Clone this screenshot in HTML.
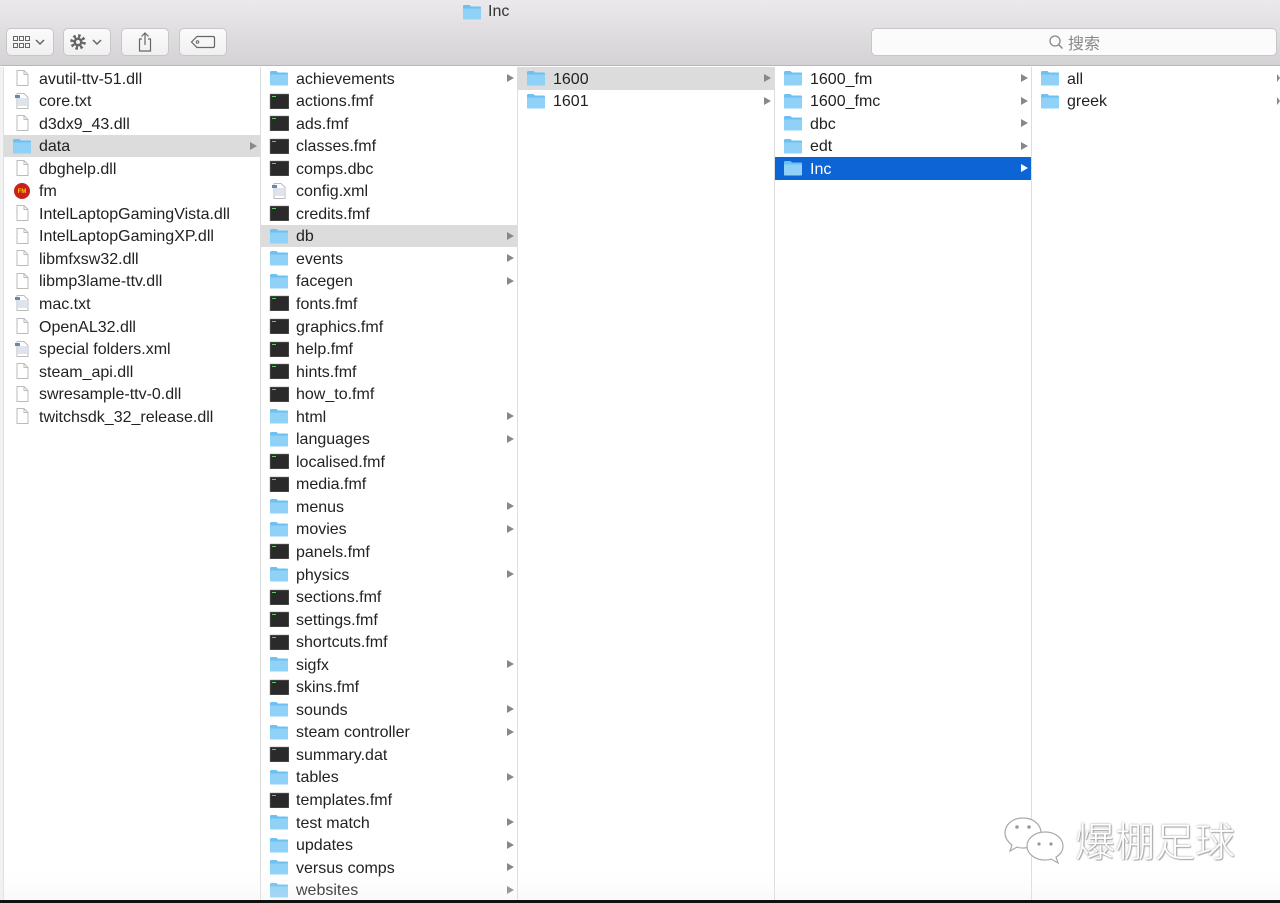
<!DOCTYPE html>
<html><head><meta charset="utf-8"><style>
*{margin:0;padding:0;box-sizing:border-box}
body{width:1280px;height:903px;overflow:hidden;background:#fff;font-family:"Liberation Sans","Noto Sans CJK SC",sans-serif;position:relative}
.tb{position:absolute;left:0;top:0;width:1280px;height:66px;background:linear-gradient(#ebe9eb,#d4d2d4);border-bottom:1px solid #b8b6b8}
.title{position:absolute;left:462px;top:3px;font-size:16px;color:#333;display:flex;align-items:center;gap:6px}
.btn{position:absolute;top:28px;height:28px;background:linear-gradient(#fbfbfb,#f0f0f0);border:1px solid #c8c6c8;border-radius:5px;display:flex;align-items:center;justify-content:center}
.search{position:absolute;left:871px;top:28px;width:406px;height:28px;background:#fbfbfb;border:1px solid #c8c6c8;border-radius:5px;font-size:16px;color:#888;display:flex;align-items:center;justify-content:center;gap:4px}
.col{position:absolute;top:67px;bottom:0;border-right:1px solid #ddd}
.row{height:22.55px;position:relative;font-size:16px;color:#222;line-height:23px}
.row span{position:absolute;left:35px;top:0.5px}
.row svg.i{position:absolute;left:8px;top:3px}
.row .ar{position:absolute;right:3px;top:7px;width:0;height:0;border-left:7px solid #888;border-top:4.5px solid transparent;border-bottom:4.5px solid transparent}
.sel{background:#dcdcdc}
.bsel{background:#0d64d5;color:#fff}
.bsel .ar{border-left-color:#fff}
.wm{position:absolute;left:1002px;top:810px;font-size:40px;color:#fff;text-shadow:0 0 2px #999,1px 1px 1px #aaa;font-family:"Noto Sans CJK SC",sans-serif;font-weight:300}
</style></head><body>
<svg width="0" height="0" style="position:absolute"><defs>
<symbol id="f" viewBox="0 0 20 16"><path d="M1 2.5Q1 1 2.5 1H7.5L9 2.5H18Q19 2.5 19 3.5V14.5Q19 15.5 18 15.5H2Q1 15.5 1 14.5Z" fill="#6cc1f2"/><path d="M1 4.5H19V14.5Q19 15.5 18 15.5H2Q1 15.5 1 14.5Z" fill="#8fd1f7"/></symbol>
<symbol id="d" viewBox="0 0 20 16"><path d="M5 0.5H12L16 4.5V15.5H5Z" fill="#fff" stroke="#bbb"/><path d="M12 0.5V4.5H16" fill="none" stroke="#bbb"/></symbol>
<symbol id="t" viewBox="0 0 20 16"><rect x="1" y="1" width="19" height="15" fill="#2a2a2a" stroke="#888" stroke-width="0.5"/><rect x="3" y="3" width="4" height="1" fill="#6c6"/></symbol>
<symbol id="x" viewBox="0 0 20 16"><path d="M5 0.5H12L16 4.5V15.5H5Z" fill="#fff" stroke="#bbb"/><rect x="6" y="5" width="9" height="8" fill="#dde4ee"/><rect x="3" y="2" width="5" height="3" fill="#68a"/></symbol>
<symbol id="m" viewBox="0 0 20 16"><circle cx="10" cy="8" r="8" fill="#c8201e"/><text x="10" y="10" font-size="6" text-anchor="middle" fill="#fc0" font-weight="bold">FM</text></symbol>
</defs></svg>
<div class="tb">
<div class="title"><svg width="20" height="16"><use href="#f"/></svg>Inc</div>
<div class="btn" style="left:6px;width:48px"><svg width="36" height="14"><g fill="none" stroke="#666"><rect x="1.5" y="1.5" width="4" height="4"/><rect x="7.5" y="1.5" width="4" height="4"/><rect x="13.5" y="1.5" width="4" height="4"/><rect x="1.5" y="8.5" width="4" height="4"/><rect x="7.5" y="8.5" width="4" height="4"/><rect x="13.5" y="8.5" width="4" height="4"/><path d="M24 5L28 9L32 5" stroke-width="1.5"/></g></svg></div>
<div class="btn" style="left:63px;width:48px"><svg width="36" height="18"><circle cx="9" cy="9" r="6" fill="none" stroke="#666" stroke-width="3.5" stroke-dasharray="2.4 2.3"/><circle cx="9" cy="9" r="4.5" fill="#666"/><circle cx="9" cy="9" r="2" fill="#f4f4f4"/><path d="M24 7L28 11L32 7" stroke="#666" stroke-width="1.5" fill="none"/></svg></div>
<div class="btn" style="left:121px;width:48px"><svg width="18" height="20"><path d="M6 7H3.5V19H14.5V7H12M9 13V1M5.5 4.5L9 1L12.5 4.5" fill="none" stroke="#666" stroke-width="1.2"/></svg></div>
<div class="btn" style="left:179px;width:48px"><svg width="26" height="14"><path d="M7 1.5H23Q24.5 1.5 24.5 3V11Q24.5 12.5 23 12.5H7L1.5 7Z" fill="none" stroke="#666" stroke-width="1.2"/><circle cx="7.5" cy="7" r="1.3" fill="none" stroke="#666"/></svg></div>
<div class="search"><svg width="16" height="16"><circle cx="7" cy="7" r="5" fill="none" stroke="#888" stroke-width="1.3"/><path d="M10.5 10.5L14.5 14.5" stroke="#888" stroke-width="1.5"/></svg>搜索</div>
</div>
<div style="position:absolute;left:0;top:67px;width:4px;bottom:0;background:#f2f2f2;border-right:1px solid #e0e0e0"></div>
<div class="col" style="left:4px;width:257px">
<div class="row"><svg class="i" width="20" height="16"><use href="#d"/></svg><span>avutil-ttv-51.dll</span></div>
<div class="row"><svg class="i" width="20" height="16"><use href="#x"/></svg><span>core.txt</span></div>
<div class="row"><svg class="i" width="20" height="16"><use href="#d"/></svg><span>d3dx9_43.dll</span></div>
<div class="row sel"><svg class="i" width="20" height="16"><use href="#f"/></svg><span>data</span><i class="ar"></i></div>
<div class="row"><svg class="i" width="20" height="16"><use href="#d"/></svg><span>dbghelp.dll</span></div>
<div class="row"><svg class="i" width="20" height="16"><use href="#m"/></svg><span>fm</span></div>
<div class="row"><svg class="i" width="20" height="16"><use href="#d"/></svg><span>IntelLaptopGamingVista.dll</span></div>
<div class="row"><svg class="i" width="20" height="16"><use href="#d"/></svg><span>IntelLaptopGamingXP.dll</span></div>
<div class="row"><svg class="i" width="20" height="16"><use href="#d"/></svg><span>libmfxsw32.dll</span></div>
<div class="row"><svg class="i" width="20" height="16"><use href="#d"/></svg><span>libmp3lame-ttv.dll</span></div>
<div class="row"><svg class="i" width="20" height="16"><use href="#x"/></svg><span>mac.txt</span></div>
<div class="row"><svg class="i" width="20" height="16"><use href="#d"/></svg><span>OpenAL32.dll</span></div>
<div class="row"><svg class="i" width="20" height="16"><use href="#x"/></svg><span>special folders.xml</span></div>
<div class="row"><svg class="i" width="20" height="16"><use href="#d"/></svg><span>steam_api.dll</span></div>
<div class="row"><svg class="i" width="20" height="16"><use href="#d"/></svg><span>swresample-ttv-0.dll</span></div>
<div class="row"><svg class="i" width="20" height="16"><use href="#d"/></svg><span>twitchsdk_32_release.dll</span></div>
</div>
<div class="col" style="left:261px;width:257px">
<div class="row"><svg class="i" width="20" height="16"><use href="#f"/></svg><span>achievements</span><i class="ar"></i></div>
<div class="row"><svg class="i" width="20" height="16"><use href="#t"/></svg><span>actions.fmf</span></div>
<div class="row"><svg class="i" width="20" height="16"><use href="#t"/></svg><span>ads.fmf</span></div>
<div class="row"><svg class="i" width="20" height="16"><use href="#t"/></svg><span>classes.fmf</span></div>
<div class="row"><svg class="i" width="20" height="16"><use href="#t"/></svg><span>comps.dbc</span></div>
<div class="row"><svg class="i" width="20" height="16"><use href="#x"/></svg><span>config.xml</span></div>
<div class="row"><svg class="i" width="20" height="16"><use href="#t"/></svg><span>credits.fmf</span></div>
<div class="row sel"><svg class="i" width="20" height="16"><use href="#f"/></svg><span>db</span><i class="ar"></i></div>
<div class="row"><svg class="i" width="20" height="16"><use href="#f"/></svg><span>events</span><i class="ar"></i></div>
<div class="row"><svg class="i" width="20" height="16"><use href="#f"/></svg><span>facegen</span><i class="ar"></i></div>
<div class="row"><svg class="i" width="20" height="16"><use href="#t"/></svg><span>fonts.fmf</span></div>
<div class="row"><svg class="i" width="20" height="16"><use href="#t"/></svg><span>graphics.fmf</span></div>
<div class="row"><svg class="i" width="20" height="16"><use href="#t"/></svg><span>help.fmf</span></div>
<div class="row"><svg class="i" width="20" height="16"><use href="#t"/></svg><span>hints.fmf</span></div>
<div class="row"><svg class="i" width="20" height="16"><use href="#t"/></svg><span>how_to.fmf</span></div>
<div class="row"><svg class="i" width="20" height="16"><use href="#f"/></svg><span>html</span><i class="ar"></i></div>
<div class="row"><svg class="i" width="20" height="16"><use href="#f"/></svg><span>languages</span><i class="ar"></i></div>
<div class="row"><svg class="i" width="20" height="16"><use href="#t"/></svg><span>localised.fmf</span></div>
<div class="row"><svg class="i" width="20" height="16"><use href="#t"/></svg><span>media.fmf</span></div>
<div class="row"><svg class="i" width="20" height="16"><use href="#f"/></svg><span>menus</span><i class="ar"></i></div>
<div class="row"><svg class="i" width="20" height="16"><use href="#f"/></svg><span>movies</span><i class="ar"></i></div>
<div class="row"><svg class="i" width="20" height="16"><use href="#t"/></svg><span>panels.fmf</span></div>
<div class="row"><svg class="i" width="20" height="16"><use href="#f"/></svg><span>physics</span><i class="ar"></i></div>
<div class="row"><svg class="i" width="20" height="16"><use href="#t"/></svg><span>sections.fmf</span></div>
<div class="row"><svg class="i" width="20" height="16"><use href="#t"/></svg><span>settings.fmf</span></div>
<div class="row"><svg class="i" width="20" height="16"><use href="#t"/></svg><span>shortcuts.fmf</span></div>
<div class="row"><svg class="i" width="20" height="16"><use href="#f"/></svg><span>sigfx</span><i class="ar"></i></div>
<div class="row"><svg class="i" width="20" height="16"><use href="#t"/></svg><span>skins.fmf</span></div>
<div class="row"><svg class="i" width="20" height="16"><use href="#f"/></svg><span>sounds</span><i class="ar"></i></div>
<div class="row"><svg class="i" width="20" height="16"><use href="#f"/></svg><span>steam controller</span><i class="ar"></i></div>
<div class="row"><svg class="i" width="20" height="16"><use href="#t"/></svg><span>summary.dat</span></div>
<div class="row"><svg class="i" width="20" height="16"><use href="#f"/></svg><span>tables</span><i class="ar"></i></div>
<div class="row"><svg class="i" width="20" height="16"><use href="#t"/></svg><span>templates.fmf</span></div>
<div class="row"><svg class="i" width="20" height="16"><use href="#f"/></svg><span>test match</span><i class="ar"></i></div>
<div class="row"><svg class="i" width="20" height="16"><use href="#f"/></svg><span>updates</span><i class="ar"></i></div>
<div class="row"><svg class="i" width="20" height="16"><use href="#f"/></svg><span>versus comps</span><i class="ar"></i></div>
<div class="row"><svg class="i" width="20" height="16"><use href="#f"/></svg><span>websites</span><i class="ar"></i></div>
</div>
<div class="col" style="left:518px;width:257px">
<div class="row sel"><svg class="i" width="20" height="16"><use href="#f"/></svg><span>1600</span><i class="ar"></i></div>
<div class="row"><svg class="i" width="20" height="16"><use href="#f"/></svg><span>1601</span><i class="ar"></i></div>
</div>
<div class="col" style="left:775px;width:257px">
<div class="row"><svg class="i" width="20" height="16"><use href="#f"/></svg><span>1600_fm</span><i class="ar"></i></div>
<div class="row"><svg class="i" width="20" height="16"><use href="#f"/></svg><span>1600_fmc</span><i class="ar"></i></div>
<div class="row"><svg class="i" width="20" height="16"><use href="#f"/></svg><span>dbc</span><i class="ar"></i></div>
<div class="row"><svg class="i" width="20" height="16"><use href="#f"/></svg><span>edt</span><i class="ar"></i></div>
<div class="row bsel"><svg class="i" width="20" height="16"><use href="#f"/></svg><span>Inc</span><i class="ar"></i></div>
</div>
<div class="col" style="left:1032px;width:248px;border-right:none">
<div class="row"><svg class="i" width="20" height="16"><use href="#f"/></svg><span>all</span><i class="ar" style="right:0;border-left-width:3px"></i></div>
<div class="row"><svg class="i" width="20" height="16"><use href="#f"/></svg><span>greek</span><i class="ar" style="right:0;border-left-width:3px"></i></div>
</div>
<div style="position:absolute;left:0;right:0;bottom:3px;height:30px;background:linear-gradient(rgba(240,240,240,0),rgba(235,235,235,.25))"></div>
<svg style="position:absolute;left:1003px;top:815px" width="66" height="52"><g fill="#fff" stroke="#aaa" stroke-width="1.2"><path d="M20 3C9 3 2 10 2 18C2 23 5 27 9 30L7 36L14 32C16 33 18 33 20 33C31 33 38 26 38 18C38 10 31 3 20 3Z"/><path d="M42 17C31 17 24 24 24 31C24 38 31 45 42 45C44 45 46 45 48 44L55 48L53 42C57 40 60 36 60 31C60 24 53 17 42 17Z"/></g><g fill="#999"><circle cx="14" cy="12" r="1.8"/><circle cx="26" cy="12" r="1.8"/><circle cx="36" cy="29" r="1.6"/><circle cx="48" cy="29" r="1.6"/></g></svg>
<div class="wm" style="left:1075px">爆棚足球</div>
<div style="position:absolute;left:0;right:0;bottom:0;height:3px;background:#111"></div>
</body></html>
